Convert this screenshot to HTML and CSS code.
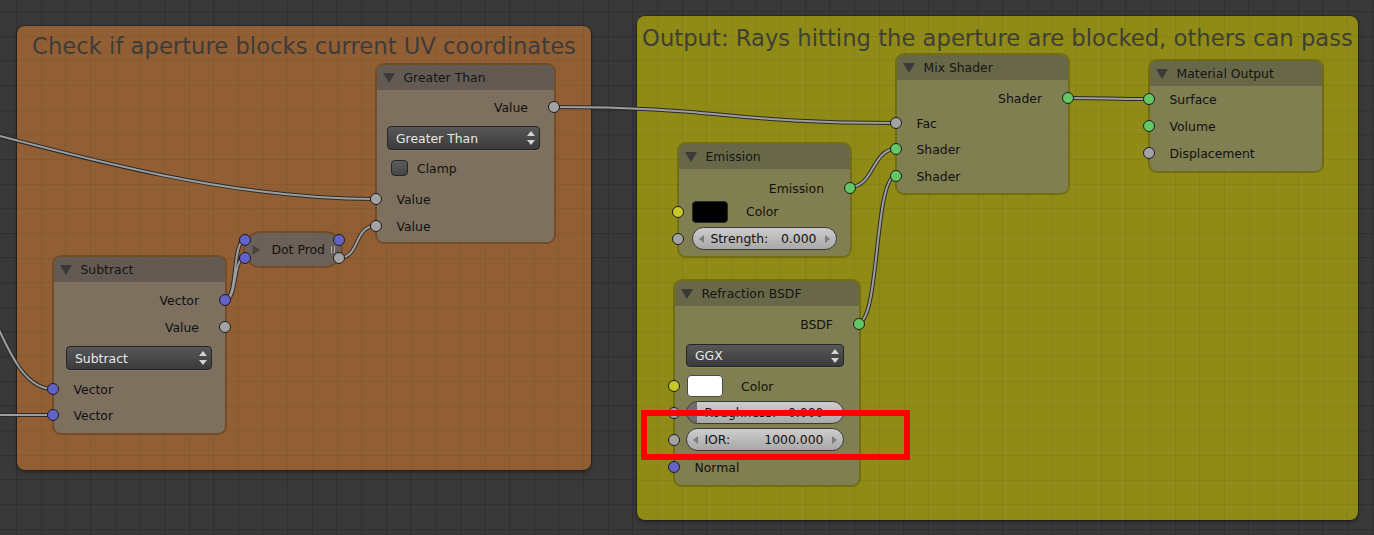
FILE: index.html
```html
<!DOCTYPE html>
<html>
<head>
<meta charset="utf-8">
<title>Node editor</title>
<link rel="stylesheet" href="styles.css">
</head>
<body>
<div class="canvas">
  <div class="frame frame-orange"><div class="frame-title">Check if aperture blocks current UV coordinates</div></div>
  <div class="frame frame-yellow"><div class="frame-title">Output: Rays hitting the aperture are blocked, others can pass</div></div>

  <svg class="wires" width="1374" height="535" viewBox="0 0 1374 535">
    <defs>
      <path id="w1" d="M -60 120 C 60 152 220 199 375 199"/>
      <path id="w2" d="M 553 107 C 724 107 724 123 896 123"/>
      <path id="w3" d="M 225 300 C 238 300 232 240 245 240"/>
      <path id="w4" d="M 225 300 C 238 300 232 258 245 258"/>
      <path id="w5" d="M 339 258 C 360 258 354 226 375 226"/>
      <path id="w6" d="M -15 300 C 5 340 20 389 53 389"/>
      <path id="w7" d="M -5 415 L 53 415"/>
      <path id="w8" d="M 850 187 C 874 187 872 149 896 149"/>
      <path id="w9" d="M 858 323 C 880 323 874 176 896 176"/>
      <path id="w10" d="M 1068 98 C 1108 98 1108 99 1150 99"/>
    </defs>
    <g class="wire-outer">
      <use href="#w1"/><use href="#w2"/><use href="#w3"/><use href="#w4"/><use href="#w5"/>
      <use href="#w6"/><use href="#w7"/><use href="#w8"/><use href="#w9"/><use href="#w10"/>
    </g>
    <g class="wire-inner">
      <use href="#w1"/><use href="#w2"/><use href="#w3"/><use href="#w4"/><use href="#w5"/>
      <use href="#w6"/><use href="#w7"/><use href="#w8"/><use href="#w9"/><use href="#w10"/>
    </g>
  </svg>

  <!-- Greater Than -->
  <div class="node on-orange n-gt">
    <div class="node-header"><svg class="tri" viewBox="0 0 12 10"><polygon points="0,0 12,0 6,10"/></svg><span>Greater Than</span></div>
    <div class="node-body pt6 pb5">
      <div class="row out"><span>Value</span><i class="sock gray"></i></div>
      <div class="ctl mt8 pl10"><div class="dropdown w153"><span>Greater Than</span><svg class="updown" viewBox="0 0 8 14"><polygon points="4,0 8,5 0,5"/><polygon points="0,9 8,9 4,14"/></svg></div></div>
      <div class="row mt7 pl14"><span class="checkbox"></span><span>Clamp</span></div>
      <div class="row in mt9"><i class="sock gray"></i><span>Value</span></div>
      <div class="row in mt5"><i class="sock gray"></i><span>Value</span></div>
    </div>
  </div>

  <!-- Dot Product (collapsed) -->
  <div class="node on-orange n-dot">
    <svg class="tri-right" viewBox="0 0 10 12"><polygon points="0,0 10,6 0,12"/></svg>
    <span>Dot Prod</span>
    <span class="grip"></span>
    <i class="sock blue dot-in1"></i>
    <i class="sock blue dot-in2"></i>
    <i class="sock blue dot-out1"></i>
    <i class="sock gray dot-out2"></i>
  </div>

  <!-- Subtract -->
  <div class="node on-orange n-sub">
    <div class="node-header"><svg class="tri" viewBox="0 0 12 10"><polygon points="0,0 12,0 6,10"/></svg><span>Subtract</span></div>
    <div class="node-body pt7 pb7">
      <div class="row out"><span>Vector</span><i class="sock blue"></i></div>
      <div class="row out mt5"><span>Value</span><i class="sock gray"></i></div>
      <div class="ctl mt8 pl12"><div class="dropdown w146"><span>Subtract</span><svg class="updown" viewBox="0 0 8 14"><polygon points="4,0 8,5 0,5"/><polygon points="0,9 8,9 4,14"/></svg></div></div>
      <div class="row in mt8"><i class="sock blue"></i><span>Vector</span></div>
      <div class="row in mt4"><i class="sock blue"></i><span>Vector</span></div>
    </div>
  </div>

  <!-- Mix Shader -->
  <div class="node on-yellow n-mix">
    <div class="node-header"><svg class="tri" viewBox="0 0 12 10"><polygon points="0,0 12,0 6,10"/></svg><span>Mix Shader</span></div>
    <div class="node-body pt7 pb6">
      <div class="row out"><span>Shader</span><i class="sock green"></i></div>
      <div class="row in mt3"><i class="sock gray"></i><span>Fac</span></div>
      <div class="row in mt4"><i class="sock green"></i><span>Shader</span></div>
      <div class="row in mt5"><i class="sock green"></i><span>Shader</span></div>
    </div>
  </div>

  <!-- Material Output -->
  <div class="node on-yellow n-mat">
    <div class="node-header"><svg class="tri" viewBox="0 0 12 10"><polygon points="0,0 12,0 6,10"/></svg><span>Material Output</span></div>
    <div class="node-body pt2 pb7">
      <div class="row in"><i class="sock green"></i><span>Surface</span></div>
      <div class="row in mt5"><i class="sock green"></i><span>Volume</span></div>
      <div class="row in mt5"><i class="sock gray"></i><span>Displacement</span></div>
    </div>
  </div>

  <!-- Emission -->
  <div class="node on-yellow n-emi">
    <div class="node-header"><svg class="tri" viewBox="0 0 12 10"><polygon points="0,0 12,0 6,10"/></svg><span>Emission</span></div>
    <div class="node-body pt8 pb6">
      <div class="row out"><span>Emission</span><i class="sock green"></i></div>
      <div class="row prop mt1 pl13"><i class="sock yellow"></i><span class="swatch black"></span><span class="swatch-label">Color</span></div>
      <div class="row prop mt4 pl13"><i class="sock gray"></i>
        <div class="slider w145"><svg class="arr" viewBox="0 0 5 8"><polygon points="5,0 5,8 0,4"/></svg><span>Strength:</span><span class="grow"></span><span>0.000</span><svg class="arr arr-r" viewBox="0 0 5 8"><polygon points="0,0 5,4 0,8"/></svg></div>
      </div>
    </div>
  </div>

  <!-- Refraction BSDF -->
  <div class="node on-yellow n-ref">
    <div class="node-header"><svg class="tri" viewBox="0 0 12 10"><polygon points="0,0 12,0 6,10"/></svg><span>Refraction BSDF</span></div>
    <div class="node-body pt7 pb7">
      <div class="row out"><span>BSDF</span><i class="sock green"></i></div>
      <div class="ctl mt9 pl11"><div class="dropdown w158 h23"><span>GGX</span><svg class="updown" viewBox="0 0 8 14"><polygon points="4,0 8,5 0,5"/><polygon points="0,9 8,9 4,14"/></svg></div></div>
      <div class="row mt8 pl12"><i class="sock yellow"></i><span class="swatch white"></span><span class="swatch-label">Color</span></div>
      <div class="row prop mt4 pl11"><i class="sock gray"></i>
        <div class="slider factor w158"><svg class="arr hidden" viewBox="0 0 5 8"><polygon points="5,0 5,8 0,4"/></svg><span>Roughness:</span><span class="grow"></span><span>0.000</span><svg class="arr arr-r hidden" viewBox="0 0 5 8"><polygon points="0,0 5,4 0,8"/></svg></div>
      </div>
      <div class="row prop mt4 pl11"><i class="sock gray"></i>
        <div class="slider w158"><svg class="arr" viewBox="0 0 5 8"><polygon points="5,0 5,8 0,4"/></svg><span>IOR:</span><span class="grow"></span><span>1000.000</span><svg class="arr arr-r" viewBox="0 0 5 8"><polygon points="0,0 5,4 0,8"/></svg></div>
      </div>
      <div class="row in mt5"><i class="sock blue"></i><span>Normal</span></div>
    </div>
  </div>

  <div class="highlight"></div>
</div>
</body>
</html>
```

FILE: styles.css
```css
* { box-sizing: border-box; }

html, body { margin: 0; padding: 0; }

body {
  width: 1374px;
  height: 535px;
  overflow: hidden;
  background-color: #393939;
  background-image:
    repeating-linear-gradient(to right, #2e2e2e 0, #2e2e2e 1px, transparent 1px, transparent 24.65px),
    repeating-linear-gradient(to bottom, #2e2e2e 0, #2e2e2e 1px, transparent 1px, transparent 24.65px);
  background-position: 16.2px 11.2px;
  font-family: "DejaVu Sans", "Liberation Sans", sans-serif;
  font-size: 12.4px;
  color: #111;
}

.canvas {
  position: relative;
  width: 1374px;
  height: 535px;
}

/* Frames */
.frame {
  position: absolute;
  border-radius: 8px;
  box-shadow: 0 0 0 1px rgba(0, 0, 0, 0.22), 0 2px 4px rgba(0, 0, 0, 0.35);
  background-image:
    repeating-linear-gradient(to right, rgba(0,0,0,0.06) 0, rgba(0,0,0,0.06) 1px, transparent 1px, transparent 24.65px),
    repeating-linear-gradient(to bottom, rgba(0,0,0,0.06) 0, rgba(0,0,0,0.06) 1px, transparent 1px, transparent 24.65px);
  background-attachment: fixed, fixed;
  background-position: 16.2px 11.2px;
}

.frame-orange {
  left: 17px;
  top: 26px;
  width: 574px;
  height: 444px;
  background-color: #925f34;
}

.frame-yellow {
  left: 637px;
  top: 16px;
  width: 721px;
  height: 504px;
  background-color: #8f8b16;
}

.frame-title {
  font-size: 22.7px;
  line-height: 26px;
  text-align: center;
  white-space: nowrap;
  color: #3d3c3a;
}

.frame-orange .frame-title { padding-top: 7px; }
.frame-yellow .frame-title { padding-top: 9px; color: #3f3f33; }

/* Wires */
.wires {
  position: absolute;
  left: 0;
  top: 0;
  pointer-events: none;
}

.wire-outer {
  fill: none;
  stroke: #2a2a2a;
  stroke-width: 4;
}

.wire-inner {
  fill: none;
  stroke: #9e9e9e;
  stroke-width: 2;
}

/* Nodes */
.node {
  position: absolute;
  border: 2px solid rgba(0, 0, 0, 0.2);
  border-radius: 9px;
  background-clip: padding-box;
}

.on-orange { background-color: #7d705f; }
.on-orange .node-header { background-color: #625a53; }
.on-yellow { background-color: #807f52; }
.on-yellow .node-header { background-color: #686849; }

.node-header {
  height: 25px;
  display: flex;
  align-items: center;
  padding-left: 6px;
  border-radius: 7px 7px 0 0;
  color: #151515;
  white-space: nowrap;
}

.tri {
  width: 12px;
  height: 10px;
  margin-right: 8.5px;
  fill: #3c3a38;
  flex: none;
}

.node-body {
  display: flex;
  flex-direction: column;
}

.row {
  position: relative;
  height: 22px;
  display: flex;
  align-items: center;
  white-space: nowrap;
}

.row.in { padding-left: 19.5px; }
.row.out { justify-content: flex-end; padding-right: 26px; }
.row.prop { height: 23px; }

.ctl { display: flex; }

.sock {
  position: absolute;
  top: 50%;
  width: 12px;
  height: 12px;
  margin-top: -6px;
  border-radius: 50%;
  border: 1px solid #1c1c1c;
  left: -7px;
}

.row.out .sock { left: auto; right: -6px; }

.gray { background-color: #a3a3a3; }
.blue { background-color: #6363c7; }
.green { background-color: #63c763; }
.yellow { background-color: #c7c729; }

/* Widgets */
.dropdown {
  height: 24px;
  border-radius: 4px;
  border: 1px solid #262626;
  background: linear-gradient(#575757, #3b3b3b);
  box-shadow: 0 1px 0 rgba(255, 255, 255, 0.07);
  color: #e8e8e8;
  display: flex;
  align-items: center;
  padding-left: 8px;
  white-space: nowrap;
}

.updown {
  width: 8px;
  height: 14px;
  margin-left: auto;
  margin-right: 4px;
  fill: #d2d2d2;
}

.checkbox {
  width: 17px;
  height: 16px;
  border-radius: 4px;
  border: 1px solid #262626;
  background: linear-gradient(#5c5c5c, #464646);
  margin-right: 9px;
  flex: none;
}

.swatch {
  width: 36px;
  height: 23px;
  border-radius: 4px;
  border: 1px solid #2a2a2a;
  flex: none;
}

.row .swatch { height: 22px; }
.swatch.black { background-color: #000; }
.swatch.white { background-color: #fff; border-color: #4a4a4a; }
.swatch-label { margin-left: 18px; }

.slider {
  height: 23px;
  border-radius: 11.5px;
  border: 1px solid #3a3a3a;
  background: linear-gradient(#cdcdcd, #a8a8a8);
  display: flex;
  align-items: center;
  padding: 0 6px;
  white-space: nowrap;
  color: #111;
}

.slider.factor {
  background:
    linear-gradient(to right, #6e6e6e 0, #6e6e6e 10px, transparent 10px),
    linear-gradient(#cdcdcd, #a8a8a8);
}

.arr {
  width: 5px;
  height: 8px;
  fill: #7c7c7c;
  margin-right: 6.4px;
  flex: none;
}

.arr-r { margin-right: 0; margin-left: 8.6px; }
.hidden { visibility: hidden; }
.grow { flex: 1; }

/* Collapsed Dot Product node */
.n-dot {
  left: 243px;
  top: 231px;
  width: 100px;
  height: 37px;
  border-radius: 18px;
  background-color: #6c6158;
  display: flex;
  align-items: center;
  padding-left: 5px;
  white-space: nowrap;
}

.tri-right {
  width: 13px;
  height: 10px;
  fill: #4c4641;
  margin-right: 8.5px;
  flex: none;
}

.grip {
  width: 4px;
  height: 7px;
  border-left: 1px solid #a7a7b8;
  border-right: 1px solid #a7a7b8;
  margin-left: 6px;
}

.dot-in1 { left: -6px; top: 1px; margin-top: 0; }
.dot-in2 { left: -6px; top: 19px; margin-top: 0; }
.dot-out1 { left: auto; right: -4px; top: 1px; margin-top: 0; }
.dot-out2 { left: auto; right: -4px; top: 19px; margin-top: 0; }

/* Node placement on the canvas */
.n-gt { left: 375px; top: 63px; width: 181px; height: 181px; }
.n-sub { left: 52px; top: 255px; width: 175px; height: 180px; }
.n-mix { left: 895px; top: 53px; width: 175px; height: 142px; }
.n-mat { left: 1148px; top: 59px; width: 176px; height: 114px; }
.n-emi { left: 677px; top: 142px; width: 175px; height: 116px; }
.n-ref { left: 673px; top: 279px; width: 188px; height: 208px; }

/* Highlight box */
.highlight {
  position: absolute;
  left: 641px;
  top: 410px;
  width: 269px;
  height: 50px;
  border: 6px solid #ff0000;
}

/* Spacing utilities */
.mt1 { margin-top: 1px; }
.mt3 { margin-top: 3px; }
.mt4 { margin-top: 4px; }
.mt5 { margin-top: 5px; }
.mt7 { margin-top: 7px; }
.mt8 { margin-top: 8px; }
.mt9 { margin-top: 9px; }
.pt2 { padding-top: 2px; }
.pt6 { padding-top: 6px; }
.pt7 { padding-top: 7px; }
.pt8 { padding-top: 8px; }
.pb5 { padding-bottom: 5px; }
.pb6 { padding-bottom: 6px; }
.pb7 { padding-bottom: 7px; }
.pl10 { padding-left: 10px; }
.pl11 { padding-left: 11px; }
.pl12 { padding-left: 12px; }
.pl13 { padding-left: 13px; }
.pl14 { padding-left: 14px; }
.w145 { width: 145px; }
.w146 { width: 146px; }
.w153 { width: 153px; }
.w158 { width: 158px; }
.h23 { height: 23px; }
```
